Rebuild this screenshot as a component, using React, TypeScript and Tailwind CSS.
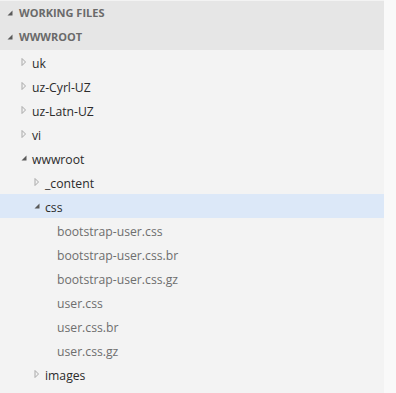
import React from "react";

type Node = {
  name: string;
  level: number;
  kind: "folder" | "file";
  open?: boolean;
  selected?: boolean;
};

const tree: Node[] = [
  { name: "uk", level: 1, kind: "folder" },
  { name: "uz-Cyrl-UZ", level: 1, kind: "folder" },
  { name: "uz-Latn-UZ", level: 1, kind: "folder" },
  { name: "vi", level: 1, kind: "folder" },
  { name: "wwwroot", level: 1, kind: "folder", open: true },
  { name: "_content", level: 2, kind: "folder" },
  { name: "css", level: 2, kind: "folder", open: true, selected: true },
  { name: "bootstrap-user.css", level: 3, kind: "file" },
  { name: "bootstrap-user.css.br", level: 3, kind: "file" },
  { name: "bootstrap-user.css.gz", level: 3, kind: "file" },
  { name: "user.css", level: 3, kind: "file" },
  { name: "user.css.br", level: 3, kind: "file" },
  { name: "user.css.gz", level: 3, kind: "file" },
  { name: "images", level: 2, kind: "folder" },
];

// padding for the twistie, per depth
const indent: Record<number, string> = {
  1: "pl-[21px]",
  2: "pl-[34px]",
  3: "pl-[57px]",
};

const Closed = () => (
  <svg width="6" height="10" viewBox="0 0 6 10" className="shrink-0">
    <path d="M1 1.5 L4.5 5 L1 8.5 Z" fill="none" stroke="#a8a8a8" strokeWidth="1" />
  </svg>
);

const Open = () => (
  <svg width="6" height="10" viewBox="0 0 6 10" className="shrink-0">
    <path d="M5.5 2.5 L5.5 7.5 L0.5 7.5 Z" fill="#5a5a5a" />
  </svg>
);

const Section = ({ title }: { title: string }) => (
  <div className="flex h-6 items-center pl-[7px] gap-[6px]">
    <Open />
    <span className="pt-px text-[11px] font-bold text-[#6a6a6a]">{title}</span>
  </div>
);

export default function App() {
  return (
    <div
      className="flex h-[393px] w-[396px] overflow-hidden bg-[#f9f9f9]"
      style={{ fontFamily: '"Open Sans", "Noto Sans", sans-serif' }}
    >
      <div className="flex w-[384px] flex-col bg-[#f3f3f3]">
        {/* section headers */}
        <div className="border-t border-[#f3f3f3] bg-[#e6e6e6] pb-px">
          <Section title="WORKING FILES" />
          <Section title="WWWROOT" />
        </div>

        {/* explorer tree */}
        <div className="flex flex-col">
          {tree.map((n) => (
            <div
              key={n.name}
              className={`flex h-6 items-center gap-[5px] ${indent[n.level]} ${n.selected ? "bg-[#dce8f8]" : ""}`}
            >
              {n.kind === "folder" ? (n.open ? <Open /> : <Closed />) : null}
              <span
                className={`pt-[5px] text-[12.2px] leading-none ${n.kind === "file" ? "text-[#6e6e6e]" : "text-[#2b2b2b]"}`}
              >
                {n.name}
              </span>
            </div>
          ))}
        </div>
      </div>
    </div>
  );
}
